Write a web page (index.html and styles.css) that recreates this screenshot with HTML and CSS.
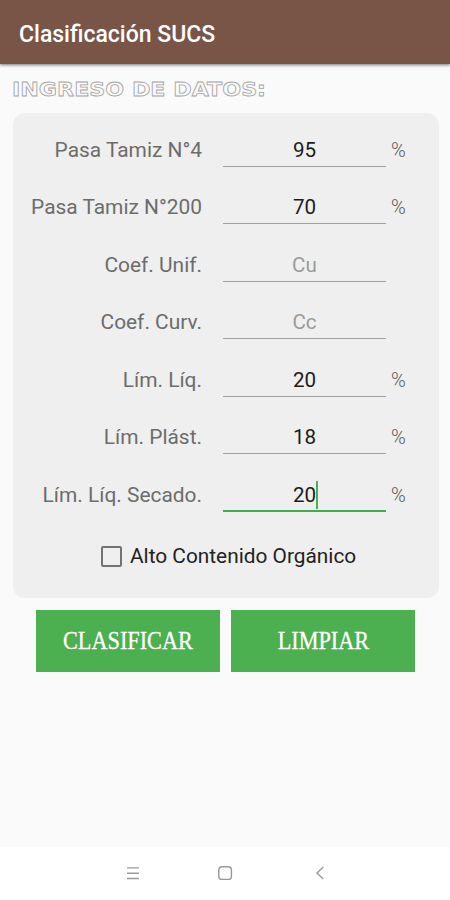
FILE: index.html
```html
<!DOCTYPE html>
<html lang="es">
<head>
<meta charset="utf-8">
<title>Clasificación SUCS</title>
<link rel="stylesheet" href="styles.css">
</head>
<body>
<header class="appbar"><h1>Clasificación SUCS</h1></header>
<main class="content">
<h2 class="heading"><span>INGRESO DE DATOS:</span></h2>
<section class="card">
<div class="row"><span class="label">Pasa Tamiz N°4</span><span class="field">95</span><span class="unit">%</span></div>
<div class="row"><span class="label">Pasa Tamiz N°200</span><span class="field">70</span><span class="unit">%</span></div>
<div class="row"><span class="label">Coef. Unif.</span><span class="field hint">Cu</span></div>
<div class="row"><span class="label">Coef. Curv.</span><span class="field hint">Cc</span></div>
<div class="row"><span class="label">Lím. Líq.</span><span class="field">20</span><span class="unit">%</span></div>
<div class="row"><span class="label">Lím. Plást.</span><span class="field">18</span><span class="unit">%</span></div>
<div class="row"><span class="label">Lím. Líq. Secado.</span><span class="field active"><span class="value">20<i class="caret"></i></span></span><span class="unit">%</span></div>
<div class="check"><span class="box"></span><span class="check-text">Alto Contenido Orgánico</span></div>
</section>
<div class="buttons">
<div class="button"><span>CLASIFICAR</span></div>
<div class="button"><span>LIMPIAR</span></div>
</div>
</main>
<nav class="navbar">
<svg width="14" height="14" viewBox="0 0 14 14"><path d="M1 1.9H13M1 7.2H13M1 12.5H13"/></svg>
<svg width="16" height="16" viewBox="0 0 16 16"><rect x="1.8" y="1.8" width="12.6" height="12.6" rx="3.2"/></svg>
<svg width="10" height="14" viewBox="0 0 10 14"><path d="M8.3 1L2 7L8.3 13"/></svg>
</nav>
</body>
</html>
```
FILE: styles.css
```css
* { box-sizing: border-box; }
body {
  margin: 0;
  width: 450px;
  height: 900px;
  display: flex;
  flex-direction: column;
  overflow: hidden;
  background: #fafafa;
  font-family: Roboto, sans-serif;
}
.appbar {
  height: 64px;
  flex: none;
  display: flex;
  align-items: center;
  padding: 5px 19px 0;
  background: #795548;
  box-shadow: 0 1px 3px rgba(0, 0, 0, .55);
}
h1 {
  margin: 0;
  color: #fff;
  font-size: 23px;
  line-height: 28px;
  font-weight: 500;
  white-space: nowrap;
}
.content { flex: 1; }
.heading {
  margin: 0;
  height: 49px;
  padding: 11px 0 0 12px;
  font-family: "DejaVu Sans", sans-serif;
  font-size: 20px;
  line-height: 28px;
  font-weight: 700;
  color: #fafafa;
  -webkit-text-stroke: .8px #a4a4a4;
  white-space: nowrap;
}
.heading span {
  display: inline-block;
  transform: scaleX(1.11);
  transform-origin: 0 50%;
}
.card {
  margin: 0 11px 0 13px;
  height: 485px;
  padding-top: 7.5px;
  border-radius: 12px;
  background: #efefef;
}
.row {
  height: 57.5px;
  display: grid;
  grid-template-columns: 189px 21px 163px 5px 20px;
  align-items: start;
  padding-top: 15px;
  color: #6c6c6c;
  font-size: 20.6px;
  line-height: 28px;
}
.label {
  grid-column: 1;
  text-align: right;
  font-size: 20.9px;
  white-space: nowrap;
}
.field {
  grid-column: 3;
  height: 31px;
  text-align: center;
  color: #1c1c1c;
  border-bottom: 1.5px solid #a0a0a0;
}
.hint { color: #9b9b9b; }
.active { border-bottom: 2px solid #3dae49; }
.value { position: relative; }
.caret {
  position: absolute;
  left: 100%;
  top: -2px;
  width: 2px;
  height: 28px;
  background: #4caf50;
}
.unit { grid-column: 5; font-size: 20px; font-weight: 300; color: #5c5c5c; }
.check {
  height: 60px;
  display: flex;
  align-items: center;
  padding: 6px 0 0 88px;
  gap: 8px;
  color: #222;
  font-size: 20.85px;
  line-height: 28px;
  white-space: nowrap;
}
.box { width: 21px; height: 21px; border: 2px solid #737373; border-radius: 2px; }
.buttons { display: flex; gap: 11px; margin: 12px 0 0 36px; }
.button {
  width: 184px;
  height: 62px;
  display: flex;
  align-items: center;
  justify-content: center;
  background: #4caf50;
  color: #fff;
  font-family: "Liberation Serif", serif;
  font-size: 25px;
  -webkit-text-stroke: .3px #fff;
}
.button span { transform: scaleX(.89); }
.navbar {
  height: 53px;
  flex: none;
  display: flex;
  align-items: center;
  padding: 0 0 1px 126px;
  background: #fff;
}
.navbar svg { fill: none; stroke: #999; stroke-width: 1.4; }
.navbar svg:nth-child(2) { margin-left: 77px; }
.navbar svg:nth-child(3) { margin-left: 82px; }
```
